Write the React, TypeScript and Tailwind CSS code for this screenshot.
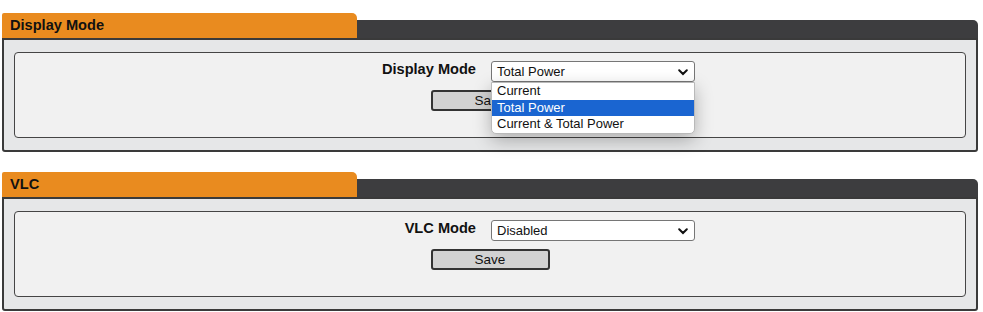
import React from 'react';

const font = { fontFamily: '"Liberation Sans", Arial, sans-serif' };

function Chevron() {
  return (
    <svg width="10" height="7" viewBox="0 0 10 7" className="absolute right-[6px] top-[7px]">
      <path d="M1.2 1.3 L5 5 L8.8 1.3" fill="none" stroke="#111" strokeWidth="2" strokeLinecap="round" />
    </svg>
  );
}

function Panel({ title, label, value, options }: { title: string; label: string; value: string; options?: string[] }) {
  return (
    <section className="w-[976px]">
      {/* tab header */}
      <div className="flex items-end h-[25px]">
        <div className="w-[355px] h-[25px] bg-[#e98b1f] rounded-tl-[2px] rounded-tr-[5px] pl-[8px] pt-[4px] text-[14.6px] font-bold text-[#111] leading-[17px]">
          {title}
        </div>
        <div className="flex-1 h-[18px] bg-[#3d3d3f] rounded-tr-[5px]" />
      </div>
      {/* body */}
      <div className="border-2 border-[#3a3a3a] rounded-b-[3px] bg-[#e6e7e8] px-[10px] pt-[12px] pb-[12px]">
        <div className="h-[86px] border border-[#454545] rounded-[4px] bg-[#f1f1f1] pt-[8px]">
          <div className="flex items-start">
            <div className="w-[461px] text-right text-[14.6px] font-bold text-[#111] leading-[17px]">{label}</div>
            <div className="relative ml-[15px] w-[204px]">
              <div className="relative h-[21px] bg-white border border-[#767676] rounded-[3px] pl-[5px] text-[13px] leading-[19px] text-[#111]">
                {value}
                <Chevron />
              </div>
              {options && (
                <ul className="absolute left-0 top-[21px] z-10 w-[204px] bg-white border border-[#b9b9b9] rounded-b-[5px] shadow-[0_6px_18px_rgba(0,0,0,0.28)] text-[13px] leading-[16px] text-[#111]">
                  {options.map(o => (
                    <li key={o} className={`pl-[5px] h-[16.5px] ${o === value ? 'bg-[#1a65d1] text-white' : ''}`}>
                      {o}
                    </li>
                  ))}
                </ul>
              )}
            </div>
          </div>
          <div className="flex justify-center mt-[8px]">
            <button className="w-[119px] h-[21px] bg-[#d2d2d2] border-2 border-[#333] rounded-[3px] text-[13.5px] leading-[16px] text-[#111]">
              Save
            </button>
          </div>
        </div>
      </div>
    </section>
  );
}

export default function App() {
  return (
    <main style={font} className="w-[983px] h-[312px] bg-white pt-[13px] pl-[2px]">
      <Panel
        title="Display Mode"
        label="Display Mode"
        value="Total Power"
        options={['Current', 'Total Power', 'Current & Total Power']}
      />
      <div className="h-[20px]" />
      <Panel title="VLC" label="VLC Mode" value="Disabled" />
    </main>
  );
}
